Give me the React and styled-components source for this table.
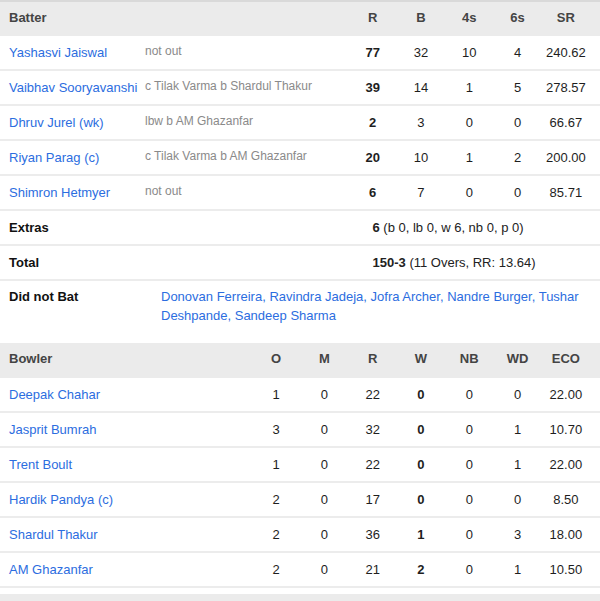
import React from "react";
import styled, { createGlobalStyle } from "styled-components";

const GlobalStyle = createGlobalStyle`
  html, body {
    margin: 0;
    padding: 0;
    background: #fff;
  }
  body {
    font-family: "Liberation Sans", Arial, sans-serif;
    font-size: 13px;
    color: #222;
  }
`;

const Page = styled.div`
  width: 600px;
  border-top: 2px solid #d9d9d9;
`;

const Row = styled.div`
  display: grid;
  grid-template-columns: ${(p) => p.cols};
  align-items: center;
  box-sizing: border-box;
  height: ${(p) => p.h || 35}px;
  border-bottom: ${(p) => (p.noBorder ? "none" : "2px solid #ececec")};
`;

const HeadRow = styled(Row)`
  background: #ebebeb;
  border-bottom: none;
  padding-bottom: 4px;
  color: #444;
  font-weight: bold;
`;

const NameCell = styled.div`
  padding-left: 9px;
  white-space: nowrap;
`;

const PlayerLink = styled.a`
  color: #2c6de0;
  text-decoration: none;
  white-space: nowrap;
`;

const Dismissal = styled.div`
  font-size: 12px;
  color: #8a8a8a;
  white-space: nowrap;
  margin-top: -3px;
`;

const Num = styled.div`
  text-align: center;
  font-weight: ${(p) => (p.bold ? "bold" : "normal")};
  color: #1e1e1e;
`;

const HeadNum = styled.div`
  text-align: center;
`;

const Label = styled.div`
  padding-left: 9px;
  font-weight: bold;
  color: #111;
  grid-column: ${(p) => p.span || "auto"};
`;

const Summary = styled.div`
  grid-column: ${(p) => p.span};
  padding-left: 24px;
  white-space: nowrap;
  color: #222;
  b {
    font-weight: bold;
  }
`;

const DnbRow = styled.div`
  display: grid;
  grid-template-columns: 161px 1fr;
  height: 62px;
  box-sizing: border-box;
  padding: 6px 10px 0 0;
  line-height: 19px;
`;

const DnbList = styled.div`
  color: #2c6de0;
`;

const Footer = styled.div`
  margin-top: 6px;
  height: 10px;
  background: #ebebeb;
`;

const BAT_COLS = "145px 1fr repeat(5, 48.3px) 10px";
const BOWL_COLS = "1fr repeat(7, 48.3px) 10px";

const batters = [
  ["Yashasvi Jaiswal", "not out", 77, 32, 10, 4, "240.62"],
  ["Vaibhav Sooryavanshi", "c Tilak Varma b Shardul Thakur", 39, 14, 1, 5, "278.57"],
  ["Dhruv Jurel (wk)", "lbw b AM Ghazanfar", 2, 3, 0, 0, "66.67"],
  ["Riyan Parag (c)", "c Tilak Varma b AM Ghazanfar", 20, 10, 1, 2, "200.00"],
  ["Shimron Hetmyer", "not out", 6, 7, 0, 0, "85.71"],
];

const bowlers = [
  ["Deepak Chahar", 1, 0, 22, 0, 0, 0, "22.00"],
  ["Jasprit Bumrah", 3, 0, 32, 0, 0, 1, "10.70"],
  ["Trent Boult", 1, 0, 22, 0, 0, 1, "22.00"],
  ["Hardik Pandya (c)", 2, 0, 17, 0, 0, 0, "8.50"],
  ["Shardul Thakur", 2, 0, 36, 1, 0, 3, "18.00"],
  ["AM Ghazanfar", 2, 0, 21, 2, 0, 1, "10.50"],
];

export default function App() {
  return (
    <>
      <GlobalStyle />
      <Page>
        <HeadRow cols={BAT_COLS} h={34}>
          <NameCell>Batter</NameCell>
          <div />
          <HeadNum>R</HeadNum>
          <HeadNum>B</HeadNum>
          <HeadNum>4s</HeadNum>
          <HeadNum>6s</HeadNum>
          <HeadNum>SR</HeadNum>
        </HeadRow>
        {batters.map((b) => (
          <Row cols={BAT_COLS} key={b[0]}>
            <NameCell>
              <PlayerLink href="#">{b[0]}</PlayerLink>
            </NameCell>
            <Dismissal>{b[1]}</Dismissal>
            <Num bold>{b[2]}</Num>
            <Num>{b[3]}</Num>
            <Num>{b[4]}</Num>
            <Num>{b[5]}</Num>
            <Num>{b[6]}</Num>
          </Row>
        ))}
        <Row cols={BAT_COLS}>
          <Label span="1 / 3">Extras</Label>
          <Summary span="3 / 9">
            <b>6</b> (b 0, lb 0, w 6, nb 0, p 0)
          </Summary>
        </Row>
        <Row cols={BAT_COLS}>
          <Label span="1 / 3">Total</Label>
          <Summary span="3 / 9">
            <b>150-3</b> (11 Overs, RR: 13.64)
          </Summary>
        </Row>
        <DnbRow>
          <Label>Did not Bat</Label>
          <DnbList>
            Donovan Ferreira, Ravindra Jadeja, Jofra Archer, Nandre Burger, Tushar
            Deshpande, Sandeep Sharma
          </DnbList>
        </DnbRow>

        <HeadRow cols={BOWL_COLS}>
          <NameCell>Bowler</NameCell>
          <HeadNum>O</HeadNum>
          <HeadNum>M</HeadNum>
          <HeadNum>R</HeadNum>
          <HeadNum>W</HeadNum>
          <HeadNum>NB</HeadNum>
          <HeadNum>WD</HeadNum>
          <HeadNum>ECO</HeadNum>
        </HeadRow>
        {bowlers.map((b) => (
          <Row cols={BOWL_COLS} key={b[0]}>
            <NameCell>
              <PlayerLink href="#">{b[0]}</PlayerLink>
            </NameCell>
            <Num>{b[1]}</Num>
            <Num>{b[2]}</Num>
            <Num>{b[3]}</Num>
            <Num bold>{b[4]}</Num>
            <Num>{b[5]}</Num>
            <Num>{b[6]}</Num>
            <Num>{b[7]}</Num>
          </Row>
        ))}
        <Footer />
      </Page>
    </>
  );
}
